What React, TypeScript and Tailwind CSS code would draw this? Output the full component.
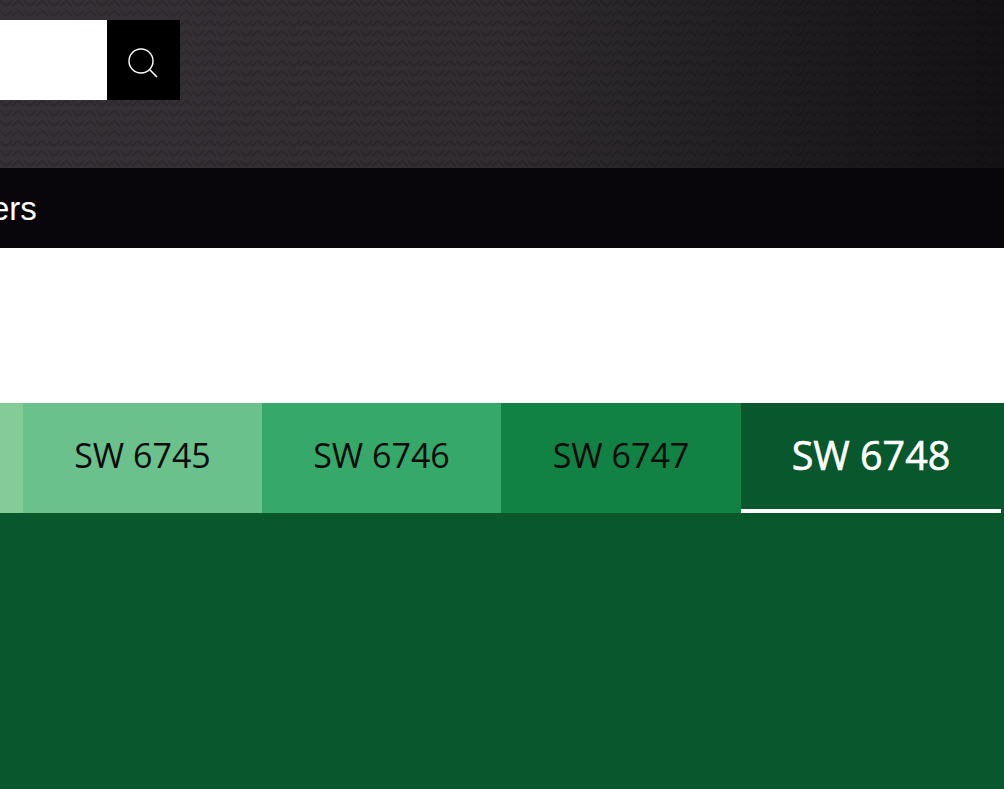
import React from 'react';

const shades = [
  { label: '', className: 'w-[23px] bg-[#83cb97]' },
  { label: 'SW 6745', className: 'w-[239px] bg-[#6ac18c]' },
  { label: 'SW 6746', className: 'w-[239px] bg-[#36a86a]' },
  { label: 'SW 6747', className: 'w-[240px] bg-[#118144]' },
];

const App: React.FC = () => {
  return (
    <div className="flex flex-col h-[789px] w-[1004px] overflow-hidden bg-white font-['Open_Sans',sans-serif]">
      {/* Header */}
      <header className="relative h-[168px] shrink-0 pt-5 bg-gradient-to-r from-[#363136] via-[#302c30] to-[#141215]">
        <svg className="absolute inset-0 h-full w-full" aria-hidden="true">
          <defs>
            <pattern id="chevron" width="24" height="10" patternUnits="userSpaceOnUse">
              <path d="M0 1 L6 6 L12 1 M12 6 L18 1 L24 6" fill="none" stroke="#000" strokeOpacity="0.16" strokeWidth="2" />
            </pattern>
          </defs>
          <rect width="100%" height="100%" fill="url(#chevron)" />
        </svg>
        <div className="relative flex h-20 w-[180px]">
          <div className="w-[107px] bg-white" />
          <button className="flex w-[73px] items-center justify-center bg-black text-white">
            <svg width="32" height="32" viewBox="0 0 32 32" fill="none" stroke="currentColor" strokeWidth="1.4" className="mt-[8px] ml-[1px]">
              <circle cx="13" cy="13" r="12" />
              <path d="M21.5 21.5 L29 29" strokeWidth="1.6" />
            </svg>
          </button>
        </div>
      </header>

      {/* Nav */}
      <nav className="flex h-20 shrink-0 items-center bg-[#08060a] pt-[2px] font-['Liberation_Sans',sans-serif] text-[33px] text-white">
        <span className="-ml-[9px]">ers</span>
      </nav>

      <div className="h-[155px] shrink-0 bg-white" />

      {/* Shade tabs */}
      <div className="flex h-[110px] shrink-0 bg-[#09572d]">
        {shades.map((shade, i) => (
          <div key={i} className={`flex items-center justify-center pb-[6px] text-[34px] text-[#0a0a0a] ${shade.className}`}>
            {shade.label}
          </div>
        ))}
        <div className="flex w-[260px] items-center justify-center border-b-[4px] border-white pb-[1px] text-[39.5px] font-medium text-white [-webkit-text-stroke:0.6px_white]">
          SW 6748
        </div>
      </div>

      <div className="flex-1 bg-[#09572d]" />
    </div>
  );
};

export default App;
